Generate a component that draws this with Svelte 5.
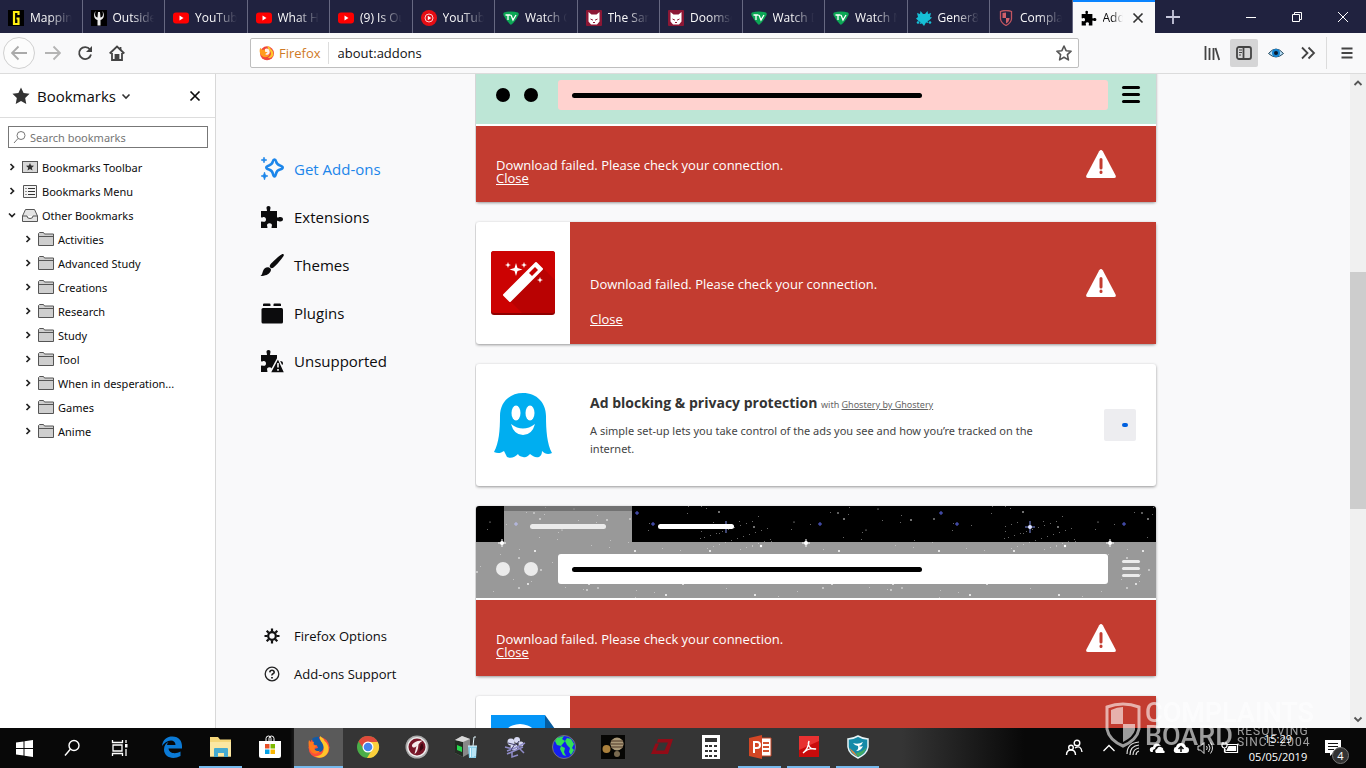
<script>
  import { onMount } from "svelte";

  let query = $state("");
  let address = $state("about:addons");
  let panel;

  const tabs = [
    { icon: "g", title: "Mapping" },
    { icon: "fork", title: "Outsider" },
    { icon: "yt", title: "YouTube" },
    { icon: "yt", title: "What Hap" },
    { icon: "yt", title: "(9) Is Our" },
    { icon: "ytm", title: "YouTube" },
    { icon: "tv", title: "Watch G" },
    { icon: "cat", title: "The Sand" },
    { icon: "cat", title: "Doomsd" },
    { icon: "tv", title: "Watch D" },
    { icon: "tv", title: "Watch M" },
    { icon: "paw", title: "Gener8" },
    { icon: "shield", title: "Complai" },
    { icon: "puzzle", title: "Add-on", active: true },
  ];

  const bookmarks = [
    { icon: "toolbar", label: "Bookmarks Toolbar" },
    { icon: "list", label: "Bookmarks Menu" },
    { icon: "tray", label: "Other Bookmarks", open: true },
    ...["Activities", "Advanced Study", "Creations", "Research", "Study", "Tool", "When in desperation...", "Games", "Anime"]
      .map((label) => ({ icon: "folder", label, child: true })),
  ];

  const categories = [
    { icon: "sparkle", label: "Get Add-ons", selected: true },
    { icon: "puzzle", label: "Extensions" },
    { icon: "brush", label: "Themes" },
    { icon: "plugin", label: "Plugins" },
    { icon: "unsupported", label: "Unsupported" },
  ];

  const pinned = [
    { id: "edge", label: "Edge" },
    { id: "explorer", label: "File Explorer", running: true },
    { id: "store", label: "Store" },
    { id: "firefox", label: "Firefox", active: true },
    { id: "chrome", label: "Chrome" },
    { id: "comodo", label: "Comodo" },
    { id: "cleaner", label: "Cleaner" },
    { id: "chip", label: "Molecules" },
    { id: "globe", label: "Globe" },
    { id: "planet", label: "Planets" },
    { id: "ltspice", label: "LTspice" },
    { id: "calc", label: "Calculator" },
    { id: "ppt", label: "PowerPoint", running: true },
    { id: "pdf", label: "Acrobat", running: true },
    { id: "guard", label: "Security", running: true },
  ];

  // x, y, radius inside one 304px star tile
  const stars = [
    [58, 7, 0.7], [64, 13, 0.8], [131, 14, 0.8], [154, 13, 0.7], [243, 6, 0.8], [278, 21, 0.8],
    [59, 45, 1], [159, 45, 1], [234, 45, 1], [285, 40, 1.2], [52, 78, 0.9], [43, 82, 0.8],
    [113, 78, 0.9], [111, 84, 0.8], [122, 82, 0.7], [207, 78, 0.9], [190, 89, 1], [279, 89, 1],
    [65, 64, 0.8], [43, 52, 0.8], [1, 66, 0.8], [14, 16, 0.5], [98, 3, 0.5], [86, 24, 0.5],
  ];
  const dust = Array.from({ length: 90 }, (_, i) => [
    i % 3 ? (i * 97 + 31) % 304 : 225 + ((i * 37) % 72),
    i % 3 ? (i * 53 + 11) % 92 : (i * 29) % 44,
  ]);

  onMount(() => {
    panel.scrollTop = 42;
  });
</script>

{#snippet puzzle()}
  <path d="M1 6h5.500c1-.3.400-1.200.200-1.800C6 2.200 7 1 8.500 1s2.500 1.200 1.800 3.200c-.2.600-.8 1.500.2 1.800H17v6c.4 1 1.200.4 1.800.2 2-.7 4.200 0 4.200 2s-2.200 2.700-4.200 2c-.6-.2-1.400-.8-1.800.2V23h-5c-.9-.3-.4-1.100-.2-1.700.6-1.800-.5-3-2.300-3s-2.900 1.200-2.300 3c.2.600.7 1.400-.2 1.700H1v-6c.3-.9 1.200-.5 1.800-.3 1.900.6 3.200-.5 3.200-2.200s-1.300-2.900-3.200-2.200c-.6.200-1.500.6-1.800-.3z"/>
{/snippet}

{#snippet close_x()}
  <svg width="14" height="14" viewBox="0 0 14 14" fill="none" stroke="currentColor" stroke-width="1.7">
    <path d="M2.500 2.500l9 9M11.500 2.500l-9 9"/>
  </svg>
{/snippet}

{#snippet favicon(name)}
  <svg class="favicon" width="16" height="16" viewBox="0 0 16 16">
    {#if name === "g"}
      <rect width="16" height="16" fill="#000"/>
      <path d="M10.500 5V2H6v12h4.500V8.500H8.500" fill="none" stroke="#ffef10" stroke-width="2.200"/>
    {:else if name === "fork"}
      <rect width="16" height="16" fill="#000"/>
      <path d="M4.500 1C2 5 3 9 6.500 10v5.500h3V10C13 9 14 5 11.500 1q1.500 6-2 6.500L9 2H7l-.5 5.500Q3 7 4.500 1z" fill="#eee"/>
    {:else if name === "yt"}
      <rect y="2.500" width="16" height="11" rx="3" fill="#f00"/>
      <path d="M6.500 5.500v5L10.500 8z" fill="#fff"/>
    {:else if name === "ytm"}
      <circle cx="8" cy="8" r="8" fill="#e50d14"/>
      <circle cx="8" cy="8" r="4" fill="none" stroke="#fff" stroke-width=".8"/>
      <path d="M6.800 5.800v4.400L10.300 8z" fill="#fff"/>
    {:else if name === "tv"}
      <path d="M1 2.500Q8 .5 15 2.500Q16.500 4 15 6Q12 12 8.500 14.500Q7.500 15 6.800 14Q2.500 9.500.6 5.500Q-.2 3.500 1 2.500z" fill="#0ca655"/>
      <path d="M2.500 5h5M5 5v5M8 5l2 5 3-5" fill="none" stroke="#fff" stroke-width="1.300"/>
    {:else if name === "cat"}
      <rect width="16" height="16" rx="1" fill="#8c1735"/>
      <path d="M2.500 2l3 2.500h5l3-2.500v9.500L11 14.500H5l-2.500-3z" fill="#fff"/>
      <path d="M4.500 9l2.500 1.200M11.500 9L9 10.200M7 12.500h2" stroke="#8c1735" fill="none"/>
    {:else if name === "paw"}
      <path d="M1 3l3 1 .5-3L7 4h2l2.500-3 .5 3 3-1-1 4 2 .5-3 3-1.500.5 1 2-2.500-.500L8 16l-2-2.500-2.500.5 1-2L3 11.500l-3-3L2 7z" fill="#16bfd6"/>
      <circle cx="2" cy="12.500" r="1.300" fill="#16bfd6"/><circle cx="14" cy="12.500" r="1.300" fill="#16bfd6"/>
    {:else if name === "shield"}
      <path d="M2.500 1.500Q8-.5 13.500 1.500V9Q13 13 8 15.500Q3 13 2.500 9z" fill="none" stroke="#c25560" stroke-width="1.300"/>
      <path d="M4.500 3Q6 2.500 8 2.500V8H4.500zM8 8h3.500v1Q11 12 8 13.500z" fill="#d0606a"/>
    {:else}
      <g transform="scale(.67)">{@render puzzle()}</g>
    {/if}
  </svg>
{/snippet}

{#snippet tree_icon(name)}
  <svg width="16" height="16" viewBox="0 0 16 16" fill="#e4e4e4" stroke="#555">
    {#if name === "toolbar"}
      <rect x=".5" y="2.500" width="15" height="11" fill="#d8d8d8"/>
      <path d="M8 4l1.100 2.600 2.900.200-2.200 1.900.7 2.800L8 10l-2.500 1.500.7-2.800L4 6.800l2.900-.2z" fill="#333" stroke="none"/>
    {:else if name === "list"}
      <path d="M1.500 2.500h13v12h-13z" fill="#f4f4f4"/>
      <path d="M3.500 5.500h1M6 5.500h7M3.500 8.500h1M6 8.500h7M3.500 11.500h1M6 11.500h7" stroke="#333"/>
    {:else if name === "tray"}
      <path d="M.5 9L3.500 2.500h9L15.500 9v5.500H.5z"/>
      <path d="M.5 9H5q0 2.500 3 2.500T11 9h4.500" fill="#fff"/>
    {:else}
      <path d="M.5 14.500v-12l1-1h4l1 1.500h9v11.500z" fill="#cfcfcf"/>
      <path d="M.5 5.500h15"/>
    {/if}
  </svg>
{/snippet}

{#snippet category_icon(name)}
  <svg width="24" height="24" viewBox="0 0 24 24" fill="currentColor">
    {#if name === "sparkle"}
      <path d="M14.500 2.500c1 0 1.300.8 1.600 2 .5 2.300 1.500 3.200 3.900 3.900 1.600.5 2.700.9 2.700 2s-1.100 1.600-2.700 2c-2.400.7-3.400 1.700-3.900 4-.3 1.300-.6 3-1.600 3s-1.400-1.700-1.700-3c-.5-2.300-1.500-3.300-3.800-4-1.600-.4-2.700-.9-2.700-2s1.100-1.500 2.700-2c2.300-.7 3.300-1.600 3.800-3.900.3-1.200.7-2 1.700-2z" fill="none" stroke="currentColor" stroke-width="2.600"/>
      <path d="M4 0l.8 2.200L7 3l-2.200.8L4 6l-.8-2.200L1 3l2.200-.8zM4.500 15l1 3 2.500 1-2.500 1-1 3-1-3L1 19l2.500-1z" stroke="currentColor" stroke-width=".6"/>
    {:else if name === "puzzle"}
      {@render puzzle()}
    {:else if name === "brush"}
      <path d="M23.500 1.200c1 1-.3 2.500-1.500 4-2.500 3.200-6.200 7.500-8.500 9.300-1.200 1-2.400.8-3.200 0s-.8-2 .2-3.200C12.500 8.800 17.500 4.500 20 2.500c1.500-1.200 2.700-2 3.500-1.300zM9 14.500c2 .6 2.500 2.200 1.500 4C9 21.500 5 23 .5 23c1.800-1.300 1.500-2.500 2.500-5 .9-2.300 3.200-4.300 6-3.500z"/>
    {:else if name === "plugin"}
      <path d="M4 2.500h5.500q1 0 1 1v1.500H3V3.500q0-1 1-1zM14.500 2.500H20q1 0 1 1v1.500h-7.500V3.500q0-1 1-1z"/>
      <rect x="1.500" y="7" width="21.500" height="15.500" rx="1.500"/>
    {:else}
      {@render puzzle()}
      <path d="M18 9l7 15H10z" stroke="#f9f9fa" stroke-width="1.500"/>
      <path d="M18 14v4.500M18 20v1.800" stroke="#f9f9fa" stroke-width="1.600"/>
    {/if}
  </svg>
{/snippet}

{#snippet failure(compact)}
  <div class="failure" class:failure--compact={compact}>
    <p>Download failed. Please check your connection.</p>
    <a href="#close">Close</a>
    <svg class="warning" width="30" height="28" viewBox="0 0 30 28">
      <path d="M13.200 1.200Q15-1 16.800 1.200L29.600 25.500Q30.500 28 28 28H2Q-.5 28 .4 25.500z" fill="#fff"/>
      <path d="M15 9.500v8.500M15 22v.5" stroke="#c33c30" stroke-width="3" stroke-linecap="round"/>
    </svg>
  </div>
{/snippet}

{#snippet preview(kind)}
  <div class="preview preview--{kind}">
    {#if kind === "space"}
      <svg class="sky" width="100%" height="92">
        <defs>
          <pattern id="stars" width="304" height="92" patternUnits="userSpaceOnUse">
            {#each dust as [x, y]}
              <rect {x} {y} width="1" height="1" fill="#666"/>
            {/each}
            {#each stars as [x, y, r]}
              <circle cx={x} cy={y} {r} fill="#fff"/>
            {/each}
            <path d="M26 33v8M22 37h8" stroke="#fff"/><circle cx="26" cy="37" r="2" fill="#fff"/>
            <path d="M250 15v12M245 21h10" stroke="#7f8fe8"/><circle cx="250" cy="21" r="2" fill="#dfe5ff"/>
            <path d="M40 16v4M38 18h4M177 16v4M175 18h4M161 5v4M159 7h4" stroke="#5560d8"/>
          </pattern>
        </defs>
        <rect width="100%" height="92" fill="url(#stars)"/>
      </svg>
    {/if}
    <div class="preview-tabs">
      <span class="preview-tab preview-tab--on"><i></i></span>
      <span class="preview-tab"><i></i></span>
    </div>
    <div class="preview-bar">
      <span class="dot"></span>
      <span class="dot"></span>
      <span class="preview-url"><i></i></span>
      <span class="lines"><i></i><i></i><i></i></span>
    </div>
  </div>
{/snippet}

{#snippet app_icon(name)}
  <svg width="24" height="24" viewBox="0 0 24 24">
    {#if name === "edge"}
      <path d="M2 11C3 4 7 1.500 12.500 1.500C19 1.500 22 6 22 11v2.500H8.500c.5 5 7 6 12 3v4.500C13 25 4 22.500 4 14.500c0-4 2-6.500 4.500-7.500-1 1-1.500 2-1.500 3h8.500c0-3-2-4.500-4.500-4.500C7 5.500 4 8 2 11z" fill="#0b7ad6"/>
    {:else if name === "explorer"}
      <path d="M1 2h8l2 2.500h11v17H1z" fill="#f5d77a"/>
      <path d="M1 7h21v14.500H1z" fill="#fbe7a2"/>
      <path d="M5 22v-8q0-1 1-1h12q1 0 1 1v8h-4v-4H9v4z" fill="#45aad0"/>
    {:else if name === "store"}
      <path d="M8 6V3.500Q8 1 10.500 1Q13 1 13 3.500V6M11 6V3.500Q11 1 13.500 1Q16 1 16 3.500V6" fill="none" stroke="#fff"/>
      <path d="M1 6h22v15q0 2-2 2H3q-2 0-2-2z" fill="#fff"/>
      <path d="M7 9h4.500v4.500H7z" fill="#e74e25"/><path d="M12.500 9H17v4.500h-4.500z" fill="#7db900"/>
      <path d="M7 14.500h4.500V19H7z" fill="#03a0e5"/><path d="M12.500 14.500H17V19h-4.500z" fill="#fab602"/>
    {:else if name === "firefox"}
      <circle cx="12" cy="12.500" r="10.500" fill="#ff4f3a"/>
      <path d="M13 1c2 2 4 2.500 4.500 5 4.500 3 5.500 10 2 13.500-3 3.500-8 4-12 2 6 0 10-4 9-9C15.500 8 12 5 13 1z" fill="#ffc52a"/>
      <path d="M5 4c2-2 5-2.500 7-2 0 3 4.500 6 4.500 10s-3 5.500-5.500 5c-3 0-4-2-4-3l4-1-1-2.500H8L6 8z" fill="#145ba5"/>
      <path d="M2 5l2 2.500c1-1 2-1 3-.5L6 10l4 .5-2.500 2.500c-.5 2 2 4 5.500 2.500-2 4-7 4-9 1C1.500 13 1 8 2 5z" fill="#ff7a1c"/>
    {:else if name === "chrome"}
      <circle cx="12" cy="12" r="11" fill="#4aae48"/>
      <path d="M2.500 6.500A11 11 0 0 1 21.800 7H12L8 14z" fill="#df4a3b"/>
      <path d="M21.800 7A11 11 0 0 1 11 23L16.500 14 12 7z" fill="#fbcf3b"/>
      <circle cx="12" cy="12" r="5.500" fill="#fff"/><circle cx="12" cy="12" r="4.300" fill="#4584ee"/>
    {:else if name === "comodo"}
      <circle cx="12" cy="12" r="11.500" fill="#aaa"/><circle cx="12" cy="12" r="10" fill="#eee"/>
      <circle cx="12" cy="12" r="8.500" fill="#781728"/>
      <path d="M18 5.500C12 5 5 9 7.500 12q2 1.500 4-1l-2 8Q13 17 13.500 9.500Q15 7 18 5.500z" fill="#f5eaea"/>
      <path d="M17.500 8q-3 2-3 9l4-4z" fill="#3c0812"/>
    {:else if name === "cleaner"}
      <path d="M1 5l7-4 8 3v14l-7 4-8-4z" fill="#888"/><path d="M1 5l8 2v15l-8-4z" fill="#242c24"/><path d="M1 5l7-4 8 3-7 3z" fill="#d8d8d8"/>
      <path d="M3 10l5 2v5l-5-2z" fill="#25d84c"/>
      <path d="M14 11h9l-1 12h-7z" fill="#8acfe9"/><path d="M14 11h9M19 11l1-9h2M16.500 13v9M19 13v9M21 13v8" stroke="#e4f8ff" fill="none"/>
    {:else if name === "chip"}
      <g fill="#d8daf2"><circle cx="8" cy="7" r="3.500"/><circle cx="14" cy="5" r="3"/><circle cx="18" cy="9" r="2.500"/><circle cx="11" cy="12" r="3.500"/></g>
      <path d="M2 12l8 2 12-6M4 19l16-7M4 16l8-3M9 17v5l6-2M15 12l6 6" stroke="#8f8cc8" stroke-width="1.500" fill="none"/>
      <path d="M5 8l8 2 3-4M8 15l4-6" stroke="#44406d" fill="none"/>
    {:else if name === "globe"}
      <circle cx="12" cy="12" r="11.500" fill="#1420f0" stroke="#777"/>
      <path d="M5 3l7-2-2 3 3 2-4 5-4-1-2-4zM9 11l4 2-1 4 2 4-3-1-3-6zM15 3l4 1 3 5-2 4 2 2-3 5-2-3 1-4-3-3-2-4z" fill="#32df58"/>
    {:else if name === "planet"}
      <rect width="24" height="24" fill="#060604"/><circle cx="16" cy="9" r="6.500" fill="#a99878"/>
      <path d="M10 6h12M9.500 9h13M10 12h12" stroke="#6c5741" stroke-width="1.500"/><circle cx="5.500" cy="14" r="4" fill="#aa803c"/>
      <circle cx="16" cy="19" r="3" fill="#796a50"/>
    {:else if name === "ltspice"}
      <path d="M8 4h15l-5 15H1L5.500 8.500H9L6 15.500h8.500L18 7.500H7z" fill="#920b17"/>
    {:else if name === "calc"}
      <rect x="3" width="18" height="24" fill="#fff"/><path d="M6 3h12v4H6z" fill="#333"/>
      <g fill="#333">{#each [10, 15, 20] as y}{#each [6, 10, 15] as x}<rect {x} {y} width="3" height="2"/>{/each}{/each}</g>
    {:else if name === "ppt"}
      <path d="M12 3h11v18H12z" fill="#fff" stroke="#c44727"/><path d="M15 8h6M15 12h6M15 16h6" stroke="#d35230" stroke-width="2"/>
      <path d="M1 3l13-3v24L1 21z" fill="#d24625"/><path d="M6 18V7h3q3 0 3 3t-3 3H6" fill="none" stroke="#fff" stroke-width="2"/>
    {:else if name === "pdf"}
      <path d="M2 1h20v21H2z" fill="#c90b0b"/><path d="M2 1h20v5L2 15z" fill="#e83131"/>
      <path d="M6 18c3-2 6-7 6-12-2 4 1 9 7 8-4-1-9 0-13 4z" fill="none" stroke="#fff" stroke-width="1.300"/>
    {:else}
      <path d="M12 1q5 3 10 3v8q-1 7-10 11Q3 19 2 12V4q5 0 10-3z" fill="#158aa8" stroke="#e7f5f8" stroke-width="1.500"/>
      <path d="M3.500 13Q8 16 12 22 5 18 3.500 13z" fill="#dc873f"/><path d="M20.500 12q-1 6-8.500 10l-2-4q7-1 10.500-6z" fill="#43a963"/>
      <path d="M7 8q5 2 10-1-1 3-4 4 2 1 4 0-2 5-7 5 3-2 2-5-3 0-5-3z" fill="#fff"/>
    {/if}
  </svg>
{/snippet}

<div class="screen">
  <header class="tabstrip">
    <div class="tabs">
      {#each tabs as tab}
        <div class="tab" class:tab--active={tab.active}>
          {@render favicon(tab.icon)}
          <span class="tab-title">{tab.title}</span>
          {#if tab.active}
            <button class="tab-close" aria-label="Close tab">{@render close_x()}</button>
          {/if}
        </div>
      {/each}
    </div>
    <button class="new-tab" aria-label="New tab">
      <svg width="16" height="16" viewBox="0 0 16 16" stroke="currentColor" stroke-width="1.800"><path d="M8 1v14M1 8h14"/></svg>
    </button>
    <div class="window-controls">
      <button aria-label="Minimise"><svg width="10" height="10"><path d="M0 5.500h10"/></svg></button>
      <button aria-label="Restore"><svg width="10" height="10"><path d="M.5 2.500h7v7h-7zM2.500 2.500v-2h7v7h-2"/></svg></button>
      <button aria-label="Close"><svg width="10" height="10"><path d="M0 0l10 10M10 0L0 10"/></svg></button>
    </div>
  </header>

  <nav class="toolbar">
    <div class="tools">
      <button class="tool back" aria-label="Back">
        <svg width="16" height="16" viewBox="0 0 16 16"><path d="M16 8H1M7.500 1.500L1 8l6.500 6.500"/></svg>
      </button>
      <button class="tool faded" aria-label="Forward">
        <svg width="16" height="16" viewBox="0 0 16 16"><path d="M0 8h15M8.500 1.500L15 8l-6.500 6.500"/></svg>
      </button>
      <button class="tool" aria-label="Reload">
        <svg width="16" height="16" viewBox="0 0 16 16"><path d="M13 4.500A6 6 0 1 0 14 9.500"/><path d="M15 1v6H9z" fill="currentColor" stroke="none"/></svg>
      </button>
      <button class="tool" aria-label="Home">
        <svg width="16" height="16" viewBox="0 0 16 16"><path d="M.7 8.500L8 1.500l7.300 7M3 8v7h10V8"/><path d="M6.500 14v-4h3v4zM11.500 2v3" fill="currentColor"/></svg>
      </button>
    </div>
    <div class="urlbar">
      <span class="identity">
        <svg width="16" height="16" viewBox="0 0 24 24">
          <circle cx="12" cy="12.500" r="10.500" fill="#f0453c"/>
          <path d="M13 1c2 2 4 2.500 4.500 5 4.500 3 5.500 9 2 12-2 2-5 2-6 1 6-3 5-8 2-11-2-2-3-4-2.500-7z" fill="#ffc72c"/>
          <path d="M2 4l2 3h4l3-2-1 4 4 1-2 3-3 1c2 2 5 1 7-1-1 5-7 7-11 4C1 14 0 8 2 4z" fill="#ff9c1e"/>
          <path d="M9 6q5-2 7 3 1 5-4 6l-3-1 4-3-4-1z" fill="#fff3ea"/>
        </svg>
        Firefox
      </span>
      <input aria-label="Address" bind:value={address} />
      <button class="star" aria-label="Bookmark this page">
        <svg width="16" height="16" viewBox="0 0 16 16" fill="none" stroke="#555" stroke-width="1.600" stroke-linejoin="round"><path d="M8 1l2.100 4.700 5 .5-3.700 3.500 1 5.200L8 12.300l-4.400 2.600 1-5.200L.9 6.200l5-.5z"/></svg>
      </button>
    </div>
    <div class="tools tools--end">
      <button class="tool" aria-label="Library"><svg width="16" height="16" viewBox="0 0 16 16"><path d="M1.500 1v14M5.500 3v12M9.500 3v12M11.500 3l3.700 12"/></svg></button>
      <button class="tool pressed" aria-label="Sidebars">
        <svg width="16" height="16" viewBox="0 0 16 16"><rect x="1" y="2" width="14" height="12" rx="2"/><path d="M7.500 2v12"/><path d="M3 5h3M3 7.500h3M3 10h2" stroke-width="1"/></svg>
      </button>
      <button class="tool" aria-label="Privacy">
        <svg width="16" height="16" viewBox="0 0 16 16"><path d="M.5 8.500Q8-.5 15.500 8.500Q8 15.500.5 8.500z" fill="#b7def6" stroke="#24495f" stroke-width="1"/><circle cx="8" cy="8" r="4" fill="#1584d0" stroke="none"/><circle cx="8" cy="8" r="2" fill="#06182c" stroke="none"/></svg>
      </button>
      <button class="tool" aria-label="More tools"><svg width="16" height="16" viewBox="0 0 16 16"><path d="M2 2.500L7.500 8 2 13.500M8.500 2.500L14 8l-5.500 5.500"/></svg></button>
      <span class="separator"></span>
      <button class="tool" aria-label="Menu"><svg width="16" height="16" viewBox="0 0 16 16"><path d="M2.500 3.500h11M2.500 8h11M2.500 12.500h11"/></svg></button>
    </div>
  </nav>

  <div class="browser">
    <aside class="sidebar">
      <div class="sidebar-head">
        <svg width="18" height="18" viewBox="0 0 16 16" fill="#333"><path d="M8 .5l2.300 4.900 5.300.6-3.900 3.700 1 5.300L8 12.400 3.300 15l1-5.300L.4 6l5.300-.6z"/></svg>
        <button class="sidebar-title">Bookmarks
          <svg width="10" height="10" viewBox="0 0 10 10" fill="none" stroke="#333" stroke-width="1.600"><path d="M1.500 3.500L5 7l3.500-3.500"/></svg>
        </button>
        <button class="sidebar-close" aria-label="Close sidebar">{@render close_x()}</button>
      </div>
      <label class="search">
        <svg width="14" height="14" viewBox="0 0 14 14" fill="none" stroke="#777"><circle cx="8" cy="5.500" r="4"/><path d="M5 8.500L1 13"/></svg>
        <input type="text" placeholder="Search bookmarks" aria-label="Search bookmarks" bind:value={query} />
      </label>
      <ul class="tree">
        {#each bookmarks as item}
          <li class:child={item.child}>
            <svg class="twisty" class:open={item.open} width="8" height="8" viewBox="0 0 8 8" fill="none" stroke="#222" stroke-width="1.700"><path d="M2.500 1L5.500 4l-3 3"/></svg>
            {@render tree_icon(item.icon)}
            <span>{item.label}</span>
          </li>
        {/each}
      </ul>
    </aside>

    <main class="addons">
      <div class="categories">
        <div class="category-list">
          {#each categories as category}
            <button class="category" class:category--selected={category.selected}>
              {@render category_icon(category.icon)}
              {category.label}
            </button>
          {/each}
        </div>
        <div class="help-list">
          <a href="#options">
            <svg width="16" height="16" viewBox="0 0 16 16" fill="none" stroke="#111"><circle cx="8" cy="8" r="3.800" stroke-width="2.200"/><path d="M8 .5v3M8 12.500v3M.5 8h3M12.500 8h3M2.700 2.700l2 2M11.300 11.300l2 2M13.300 2.700l-2 2M4.700 11.300l-2 2" stroke-width="2.200"/></svg>
            Firefox Options
          </a>
          <a href="#support">
            <svg width="16" height="16" viewBox="0 0 16 16" fill="none" stroke="#222" stroke-width="1.300"><circle cx="8" cy="8" r="6.800"/><path d="M5.800 6.300Q6 4.200 8 4.200t2.200 2q0 1-1.200 1.600T8 9.500" stroke-width="1.600"/><path d="M8 11v1.500" stroke-width="1.800"/></svg>
            Add-ons Support
          </a>
        </div>
      </div>

      <div class="cards" bind:this={panel}>
        <article class="card">
          {@render preview("mint")}
          {@render failure(true)}
        </article>

        <article class="card card--row">
          <div class="logo">
            <svg width="64" height="64" viewBox="0 0 64 64">
              <rect width="64" height="64" rx="3" fill="#8f0000"/>
              <rect width="64" height="62" rx="3" fill="#cc0202"/>
              <path d="M19 50l33-33 12 12v30q0 3-3 3H31z" fill="#b90202"/>
              <path d="M45 12l6 6-32 32-6-6z" fill="#fff" stroke="#fff" stroke-width="2" stroke-linejoin="round"/>
              <path d="M44 16l3 3-6 6-3-3z" fill="#c50202"/>
              <path d="M25 12l1.500 5 5 1.500-5 1.500L25 25l-1.500-5-5-1.500 5-1.500zM17 11l.8 2.200 2.200.8-2.200.8L17 17l-.8-2.200L14 14l2.200-.8zM33 11l.8 2.200 2.200.8-2.200.8L33 17l-.8-2.200L30 14l2.200-.8zM49 26l.8 2.200 2.200.8-2.200.8L49 32l-.8-2.200L46 29l2.200-.8z" fill="#fff"/>
            </svg>
          </div>
          {@render failure(false)}
        </article>

        <article class="card card--row">
          <div class="logo">
            <svg width="64" height="66" viewBox="0 0 64 66">
              <path d="M32 1C46 1 55 11 55 24c0 14 1 28 6 37-4 2-7 1-10-2 0 3-1 5-3 6-4 1-6-1-9-3-2 2-4 4-7 3s-4-1-5-3c-3 3-7 5-11 3-1-2-2-4-3-6-3 2-6 3-10 1 5-9 6-22 6-36C9 11 18 1 32 1z" fill="#00aef0"/>
              <ellipse cx="25" cy="21" rx="4.500" ry="7.500" fill="#fff"/><ellipse cx="39" cy="21" rx="4.500" ry="7.500" fill="#fff"/>
              <path d="M20 32Q32 41 44 32Q41 43 32 43T20 32z" fill="#fff"/>
            </svg>
          </div>
          <div class="info">
            <h3>Ad blocking &amp; privacy protection <small>with <a href="#ghostery">Ghostery by Ghostery</a></small></h3>
            <p>A simple set-up lets you take control of the ads you see and how you’re tracked on the internet.</p>
          </div>
          <button class="installing" aria-label="Installing"><span></span></button>
        </article>

        <article class="card">
          {@render preview("space")}
          {@render failure(true)}
        </article>

        <article class="card card--row">
          <div class="logo">
            <svg width="64" height="84" viewBox="0 0 64 84">
              <path d="M0 0h54v84H0z" fill="#0595f7"/><path d="M54 0l10 14v70H54z" fill="#075b9d"/>
              <circle cx="29" cy="29" r="20" fill="#fff"/>
            </svg>
          </div>
          {@render failure(false)}
        </article>
      </div>

      <div class="scrollbar" aria-hidden="true">
        <svg width="10" height="18" viewBox="0 0 10 18" fill="none" stroke="#555" stroke-width="1.800"><path d="M1.500 11L5 7.500 8.500 11"/></svg>
        <div class="track"><span class="thumb"></span></div>
        <svg width="10" height="18" viewBox="0 0 10 18" fill="none" stroke="#555" stroke-width="1.800"><path d="M1.500 7.500L5 11l3.500-3.500"/></svg>
      </div>
    </main>
  </div>

  <footer class="taskbar">
    <div class="system">
      <button aria-label="Start"><svg width="17" height="17" viewBox="0 0 17 17" fill="#fff"><path d="M0 2.500l7.500-1V8H0zM8.500 1.300L17 0v8H8.500zM0 9h7.500v6.500l-7.500-1zM8.500 9H17v8l-8.500-1.300z"/></svg></button>
      <button aria-label="Search"><svg width="18" height="18" viewBox="0 0 18 18" fill="none" stroke="#fff" stroke-width="1.400"><circle cx="11" cy="6.500" r="5"/><path d="M7.500 10L2 16.500"/></svg></button>
      <button aria-label="Task view"><svg width="18" height="18" viewBox="0 0 18 18" fill="none" stroke="#fff" stroke-width="1.300"><path d="M2 6h9v6H2zM1.500 1v2.500h10V1M1.500 17v-2.500h10V17M15 1v3M15 10v7"/><path d="M14 5h2.500v3.500H14z" fill="#fff" stroke="none"/></svg></button>
    </div>
    <div class="apps">
      {#each pinned as app}
        <button class="app" class:app--running={app.running} class:app--active={app.active} aria-label={app.label}>
          {@render app_icon(app.id)}
        </button>
      {/each}
    </div>
    <div class="notify">
      <svg class="people" width="18" height="18" viewBox="0 0 18 18" fill="none" stroke="#fff" stroke-width="1.400"><circle cx="12" cy="4" r="2.800"/><circle cx="6" cy="8.500" r="2.300"/><path d="M1.500 16q0-5 4.500-5t4.500 5M10 9q6-3.500 7 4"/></svg>
      <svg width="16" height="16" viewBox="0 0 16 16" fill="none" stroke="#fff" stroke-width="1.300"><path d="M2.500 11L8 5.500l5.500 5.500"/></svg>
      <svg width="16" height="16" viewBox="0 0 16 16" fill="none" stroke="#ddd" stroke-width="1.200"><path d="M2 14Q2 3 14 2M5 15q0-9 9-10M8 15q0-6 6-7M11 15q0-3 3-4"/></svg>
      <svg width="16" height="16" viewBox="0 0 16 16" fill="#fff"><path d="M1 11q-1-4 3-4 1-5 6-3l2 2q-5-1-6 3-3 1-2 3H2z"/><path d="M7 13q-2-3 1-4 1-3 4-2t2 3q3 2 1 3z"/></svg>
      <svg width="16" height="16" viewBox="0 0 16 16"><path d="M3 13q-3-1-2-4 0-2 2-2 1-4 5-4t5 4q3 0 3 3t-3 3z" fill="#fff"/><path d="M8 12V7M5.500 9L8 6.500 10.500 9" fill="none" stroke="#111" stroke-width="1.500"/></svg>
      <svg width="16" height="16" viewBox="0 0 16 16" fill="none" stroke="#ddd"><path d="M1 6h2.500L7 2.500v11L3.500 10H1zM9.500 6q1.500 2 0 4M11.500 4q3 4 0 8M13.500 2.500q4 5.500 0 11"/></svg>
      <svg width="18" height="16" viewBox="0 0 18 16" fill="none" stroke="#fff" stroke-width="1.200"><path d="M6 4.500h10.500v8H4V9"/><path d="M8 6.500h6.500v4H6z" fill="#fff"/><path d="M2 2v2M5 2v2M1 4h5v2q-.5 2-2.500 2T1 6zM3.500 8v4"/></svg>
      <time class="clock"><span>15:29</span><span>05/05/2019</span></time>
      <button class="action-center" aria-label="Notifications">
        <svg width="18" height="18" viewBox="0 0 18 18"><path d="M1 1h16v13H9l-3 3v-3H1z" fill="#fff"/><path d="M4 4.500h10M4 7.500h10M4 10.500h6" stroke="#111"/></svg>
        <span class="badge">4</span>
      </button>
    </div>
  </footer>

  <div class="watermark">
    <svg width="36" height="46" viewBox="0 0 36 46"><path d="M2 5Q18-1 34 5V27Q32 38 18 44Q4 38 2 27z" fill="none" stroke="#fff" stroke-width="3"/><path d="M6 8Q12 5 18 5V22H6zM18 22h12v6q-2 7-12 12z" fill="#fff"/></svg>
    <div class="watermark-words">
      <strong>COMPLAINTS</strong>
      <div class="watermark-row">
        <strong>BOARD</strong>
        <span>RESOLVING<br />SINCE 2004</span>
      </div>
    </div>
  </div>
</div>

<style>
  :global(body) {
    margin: 0;
  }

  .screen {
    position: relative;
    display: flex;
    flex-direction: column;
    height: 100vh;
    overflow: hidden;
    background: #f9f9fa;
    color: #0c0c0d;
    font-family: "Open Sans", "Noto Sans", sans-serif;
    font-size: 12px;
  }

  .screen * {
    box-sizing: border-box;
  }

  button {
    display: flex;
    align-items: center;
    justify-content: center;
    padding: 0;
    border: none;
    background: none;
    color: inherit;
    font: inherit;
  }

  svg {
    display: block;
    flex-shrink: 0;
  }

  p, h3, ul {
    margin: 0;
    padding: 0;
  }

  .tabstrip {
    display: flex;
    flex-shrink: 0;
    height: 33px;
    background: #20223f;
    color: #f9f9fa;
  }

  .tabs {
    display: grid;
    flex: 1;
    grid-auto-columns: minmax(0, 1fr);
    grid-auto-flow: column;
    min-width: 0;
  }

  .tab {
    display: flex;
    align-items: center;
    gap: 6px;
    padding: 2px 10px 0 8px;
    border-right: 1px solid #666881;
  }

  .tab-title {
    flex: 1;
    overflow: hidden;
    white-space: nowrap;
    mask-image: linear-gradient(to right, #000 45%, transparent);
  }

  .tab--active {
    padding: 0 8px;
    border-top: 2px solid #0a84ff;
    border-right: none;
    background: #f9f9fa;
    color: #0c0c0d;
  }

  .tab-close {
    width: 18px;
    color: #333;
  }

  .new-tab {
    width: 36px;
    margin-right: 37px;
    color: #c6c7dc;
  }

  .window-controls {
    display: flex;
  }

  .window-controls button {
    width: 46px;
  }

  .window-controls svg {
    overflow: visible;
    fill: none;
    stroke: #fff;
  }

  .toolbar {
    display: flex;
    flex-shrink: 0;
    align-items: center;
    height: 41px;
    border-bottom: 1px solid #dcdcdc;
    background: #f9f9fa;
  }

  .tools {
    display: flex;
    align-items: center;
    flex: 0 0 250px;
    gap: 4px;
    padding-left: 3px;
  }

  .tools--end {
    flex-basis: 287px;
    justify-content: flex-end;
    padding: 0 5px 0 0;
  }

  .tool {
    width: 28px;
    height: 28px;
    border-radius: 2px;
    color: #444;
  }

  .tool svg {
    fill: none;
    stroke: currentColor;
    stroke-width: 1.8;
  }

  .back {
    width: 32px;
    height: 32px;
    border: 1px solid #d0d0d0;
    border-radius: 50%;
    background: #fcfcfc;
    color: #aaa;
  }

  .faded {
    color: #b4b4b4;
  }

  .pressed {
    background: #d5d5d6;
  }

  .separator {
    width: 1px;
    height: 32px;
    margin-right: 2px;
    background: #dcdcdc;
  }

  .urlbar {
    display: flex;
    flex: 1;
    align-items: center;
    min-width: 0;
    height: 30px;
    border: 1px solid #bebebe;
    border-radius: 2px;
    background: #fff;
    font-size: 13px;
  }

  .identity {
    display: flex;
    align-items: center;
    gap: 4px;
    height: 22px;
    padding: 0 7px 0 8px;
    border-right: 1px solid #ddd;
    color: #cf7a26;
  }

  .urlbar input {
    flex: 1;
    min-width: 0;
    padding: 0 9px;
    border: none;
    outline: none;
    background: none;
    color: #111;
    font: inherit;
  }

  .star {
    width: 28px;
    height: 28px;
  }

  .browser {
    display: flex;
    flex: 1;
    min-height: 0;
  }

  .sidebar {
    flex: 0 0 216px;
    border-right: 1px solid #d8d8d8;
    background: #fff;
  }

  .sidebar-head {
    display: flex;
    align-items: center;
    gap: 7px;
    height: 44px;
    padding: 0 13px 0 12px;
    border-bottom: 1px solid #ddd;
    font-size: 15px;
  }

  .sidebar-title {
    gap: 5px;
  }

  .sidebar-close {
    margin-left: auto;
  }

  .search {
    display: flex;
    align-items: center;
    gap: 3px;
    height: 22px;
    margin: 8px 7px 7px 8px;
    padding-left: 4px;
    border: 1px solid #777;
    font-family: "Noto Sans", sans-serif;
    font-size: 11px;
  }

  .search input {
    flex: 1;
    min-width: 0;
    padding: 0;
    border: none;
    outline: none;
    background: none;
    font: inherit;
  }

  .search input::placeholder {
    color: #757575;
  }

  .tree {
    list-style: none;
    font-family: "Noto Sans", sans-serif;
    font-size: 11px;
  }

  .tree li {
    display: flex;
    align-items: center;
    height: 24px;
    gap: 4px;
    padding-left: 8px;
  }

  .tree .child {
    padding-left: 24px;
  }

  .twisty {
    margin-right: 2px;
  }

  .open {
    transform: rotate(90deg);
  }

  .addons {
    display: flex;
    flex: 1;
    min-width: 0;
  }

  .categories {
    display: flex;
    flex: 0 0 259px;
    flex-direction: column;
    justify-content: space-between;
    padding: 71px 0 35px 44px;
  }

  .category {
    gap: 10px;
    height: 48px;
    font-size: 15px;
  }

  .category--selected {
    color: #1c86ea;
  }

  .help-list a {
    display: flex;
    align-items: center;
    gap: 14px;
    height: 38px;
    padding-left: 4px;
    color: inherit;
    font-size: 13px;
    text-decoration: none;
  }

  .cards {
    display: flex;
    flex: 1;
    flex-direction: column;
    gap: 20px;
    min-width: 0;
    overflow: hidden;
    padding-left: 1px;
  }

  .card {
    flex-shrink: 0;
    width: 100%;
    max-width: 680px;
    border-radius: 3px;
    background: #fff;
    box-shadow: 0 1px 3px rgba(0, 0, 0, 0.4);
  }

  .card--row {
    display: flex;
    height: 122px;
  }

  .logo {
    flex: 0 0 94px;
    display: flex;
    align-items: center;
    justify-content: center;
  }

  .failure {
    display: grid;
    flex: 1;
    grid-template-columns: 1fr auto;
    grid-template-rows: 1fr 16px 1fr;
    padding: 0 40px 0 20px;
    background: #c33c30;
    color: #fff;
    font-size: 13px;
  }

  .failure--compact {
    height: 76px;
    margin-top: 2px;
  }

  .failure p {
    grid-row: 2;
    line-height: 18px;
  }

  .failure a {
    grid-row: 3;
    grid-column: 1;
    justify-self: start;
    padding-top: 21px;
    color: inherit;
    line-height: 14px;
  }

  .failure--compact a {
    padding-top: 0;
    line-height: 12px;
  }

  .warning {
    grid-row: 1 / 4;
    grid-column: 2;
    align-self: center;
  }

  .preview {
    position: relative;
    overflow: hidden;
    border-radius: 3px 3px 0 0;
    background: #bde6d6;
    color: #000;
  }

  .preview--space {
    background: #000;
    color: #ebebeb;
  }

  .preview i {
    display: block;
    height: 5px;
    border-radius: 3px;
    background: currentColor;
  }

  .sky {
    position: absolute;
    inset: 0;
  }

  .preview-tabs {
    position: relative;
    display: flex;
    height: 36px;
    padding-left: 28px;
  }

  .preview-tab {
    width: 128px;
    padding: 18px 26px 0;
  }

  .preview--space .preview-tab--on {
    background: rgba(255, 255, 255, 0.6);
    box-shadow: inset 0 5px rgba(0, 0, 0, 0.25);
  }

  .preview--space .preview-tab:last-child {
    color: #fff;
  }

  .preview-bar {
    position: relative;
    display: flex;
    align-items: center;
    height: 56px;
    gap: 14px;
    padding: 0 16px 3px 20px;
  }

  .preview--space .preview-bar {
    background: rgba(255, 255, 255, 0.6);
  }

  .dot {
    width: 14px;
    height: 14px;
    border-radius: 50%;
    background: currentColor;
  }

  .preview-url {
    flex: 1;
    height: 30px;
    margin-left: 6px;
    padding: 13px 14px;
    border-radius: 3px;
    background: #ffd2cf;
    color: #000;
  }

  .preview--space .preview-url {
    background: #fff;
  }

  .preview-url i {
    width: 67%;
  }

  .lines {
    display: flex;
    flex-direction: column;
    gap: 4px;
    width: 18px;
  }

  .lines i {
    height: 3px;
  }

  .info {
    flex: 1;
    padding: 27px 0 0 20px;
    color: #444;
  }

  .info h3 {
    color: #333;
    font-size: 14px;
    line-height: 24px;
    white-space: nowrap;
  }

  .info small {
    color: #666;
    font-family: "Noto Sans", sans-serif;
    font-size: 9px;
    font-weight: 400;
  }

  .info small a {
    color: inherit;
  }

  .info p {
    margin-top: 5px;
    font-family: "Noto Sans", sans-serif;
    font-size: 11px;
    line-height: 18px;
  }

  .installing {
    width: 32px;
    height: 32px;
    margin: 45px 20px 0 48px;
    padding-left: 9px;
    border-radius: 2px;
    background: #ededf0;
  }

  .installing span {
    width: 6px;
    height: 4px;
    border-radius: 2px;
    background: #0060df;
  }

  .scrollbar {
    display: flex;
    flex: 0 0 16px;
    flex-direction: column;
    align-items: center;
    background: #f0f0f0;
  }

  .track {
    flex: 1;
    width: 100%;
    display: grid;
    grid-template-rows: 180fr 237fr 201fr;
  }

  .thumb {
    grid-row: 2;
    background: #cdcdcd;
  }

  .taskbar {
    display: flex;
    flex-shrink: 0;
    height: 40px;
    background: linear-gradient(to right, #080808 290px, #353535 300px, #353535 66%, #080808 75%);
    color: #fff;
  }

  .system,
  .apps {
    display: flex;
  }

  .system button {
    width: 48px;
  }

  .apps {
    margin-left: 3px;
  }

  .app {
    width: 49px;
    border-bottom: 2px solid transparent;
    background-clip: padding-box;
  }

  .app--running {
    border-image: linear-gradient(to right, transparent 10%, #76b9ed 10% 90%, transparent 90%) 2;
  }

  .app--active {
    border-bottom-color: #76b9ed;
    background-color: #5a5a5a;
  }

  .notify {
    display: flex;
    align-items: center;
    gap: 8px;
    margin-left: auto;
  }

  .people {
    margin-right: 10px;
  }

  .clock {
    display: flex;
    flex-direction: column;
    width: 60px;
    margin-left: 1px;
    text-align: center;
    font-size: 11px;
    line-height: 18px;
  }

  .action-center {
    position: relative;
    width: 34px;
    height: 100%;
    margin-right: 16px;
  }

  .badge {
    position: absolute;
    right: 1px;
    bottom: 4px;
    width: 17px;
    height: 17px;
    border: 1px solid #777;
    border-radius: 50%;
    background: #333;
    font-size: 11px;
    line-height: 15px;
    text-align: center;
  }

  .watermark {
    position: absolute;
    right: 46px;
    bottom: 20px;
    display: flex;
    align-items: center;
    gap: 4px;
    color: #fff;
    font-family: Roboto, "Liberation Sans", sans-serif;
    opacity: 0.6;
    pointer-events: none;
  }

  .watermark-words {
    width: 175px;
  }

  .watermark strong {
    display: block;
    font-size: 27px;
    font-weight: 500;
    line-height: 23px;
  }

  .watermark-row {
    display: flex;
    align-items: center;
    gap: 4px;
  }

  .watermark-row span {
    font-size: 12px;
    letter-spacing: 1px;
    line-height: 11px;
    white-space: nowrap;
  }
</style>
